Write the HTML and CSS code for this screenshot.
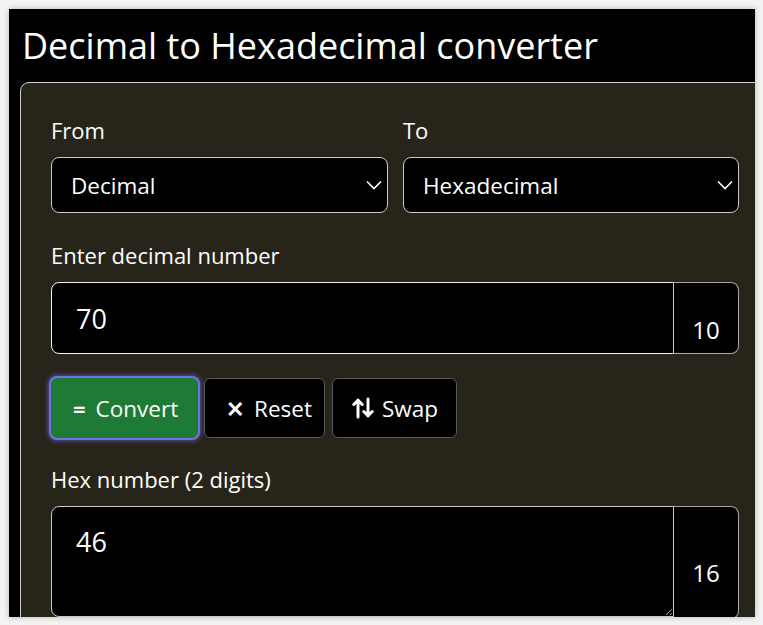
FILE: index.html
```html
<!DOCTYPE html>
<html lang="en">
<head>
<meta charset="utf-8">
<title>Decimal to Hexadecimal converter</title>
<link rel="stylesheet" href="styles.css">
</head>
<body>
<div class="window">
  <h1 class="title">Decimal to Hexadecimal converter</h1>
  <div class="card">
    <div class="pair">
      <div class="field">
        <label class="label" for="from">From</label>
        <div class="select">
          <span>Decimal</span>
          <svg class="chev" viewBox="0 0 16 10" width="16" height="10"><path d="M1 1.5l7 7 7-7" fill="none" stroke="#fff" stroke-width="1.6"/></svg>
        </div>
      </div>
      <div class="field">
        <label class="label" for="to">To</label>
        <div class="select">
          <span>Hexadecimal</span>
          <svg class="chev" viewBox="0 0 16 10" width="16" height="10"><path d="M1 1.5l7 7 7-7" fill="none" stroke="#fff" stroke-width="1.6"/></svg>
        </div>
      </div>
    </div>

    <label class="label label-gap" for="num">Enter decimal number</label>
    <div class="group">
      <input id="num" class="control" type="text" value="70">
      <span class="addon">10</span>
    </div>

    <div class="buttons">
      <button class="btn btn-go"><b class="sym">=</b> Convert</button>
      <button class="btn btn-reset"><b class="sym">&#x2715;</b> Reset</button>
      <button class="btn btn-swap">
        <svg class="swap" viewBox="0 0 22 22" width="22" height="22"><path d="M6 20V3M1.8 7.5L6 3.2l4.2 4.3M16 2v17M11.8 14.5L16 18.8l4.2-4.3" fill="none" stroke="#fff" stroke-width="3" stroke-linecap="round" stroke-linejoin="round"/></svg>
        Swap</button>
    </div>

    <label class="label label-gap2" for="hex">Hex number (2 digits)</label>
    <div class="group">
      <textarea id="hex" class="control area" readonly>46</textarea>
      <span class="addon addon-tall">16</span>
    </div>
  </div>
</div>
</body>
</html>
```

FILE: styles.css
```css
html, body {
  margin: 0;
  padding: 0;
}

body {
  background: #f3f3f3;
  font-family: "Open Sans", "Noto Sans", sans-serif;
  color: #fff;
  width: 763px;
  height: 625px;
  overflow: hidden;
}

.window {
  margin: 9px;
  width: 746px;
  height: 608px;
  background: #000;
  overflow: hidden;
  box-shadow: 0 0 6px rgba(0, 0, 0, 0.25);
}

.title {
  margin: 0;
  padding: 12px 0 0 13px;
  height: 61px;
  font-weight: 400;
  font-size: 36px;
  line-height: 49px;
  color: #fff;
}

.card {
  margin-left: 11px;
  width: 688px;
  padding: 31px 30px 40px;
  border: 1px solid #d0d0d0;
  border-radius: 9px;
  background: #27241a;
}

.pair {
  display: grid;
  grid-template-columns: 337px 336px;
  column-gap: 15px;
}

.field {
  display: flex;
  flex-direction: column;
}

.label {
  display: block;
  font-size: 22px;
  line-height: 32px;
  margin-bottom: 11px;
  color: #fff;
}

.label-gap {
  margin-top: 26px;
  margin-bottom: 11px;
}

.label-gap2 {
  margin-top: 25px;
  margin-bottom: 11px;
}

.select {
  box-sizing: border-box;
  height: 56px;
  display: flex;
  align-items: center;
  justify-content: space-between;
  padding: 0 5px 0 19px;
  border: 1px solid #c8c8c8;
  border-radius: 8px;
  background: #000;
  font-size: 22.5px;
}

.chev {
  display: block;
  flex-shrink: 0;
}

.group {
  display: flex;
}

.control {
  box-sizing: border-box;
  flex: 1;
  min-width: 0;
  height: 72px;
  margin: 0;
  padding: 0 24px;
  border: 1px solid #f2f2f2;
  border-radius: 8px 0 0 8px;
  background: #000;
  color: #fff;
  font-family: inherit;
  font-size: 27px;
  outline: none;
}

.area {
  height: 111px;
  padding-top: 16px;
  line-height: 1.4;
  resize: vertical;
  border-color: #c8c8c8;
  color-scheme: dark;
}

.addon {
  box-sizing: border-box;
  width: 66px;
  height: 72px;
  display: flex;
  align-items: flex-end;
  justify-content: center;
  padding-bottom: 11px;
  border: 1px solid #a8a8a8;
  border-left-color: #c8c8c8;
  border-radius: 0 8px 8px 0;
  margin-left: -1px;
  background: #000;
  font-size: 24px;
  line-height: 1;
}

.addon-tall {
  height: 113px;
  align-items: center;
  padding: 20px 0 0;
}

.buttons {
  display: flex;
  gap: 6px;
  margin-top: 24px;
}

.btn {
  box-sizing: border-box;
  height: 60px;
  display: flex;
  align-items: center;
  gap: 10px;
  padding: 0 19px;
  border: 1px solid #5a5a5a;
  border-radius: 6px;
  background: #000;
  color: #fff;
  font-family: inherit;
  font-size: 22.5px;
  white-space: nowrap;
}

.btn-go {
  width: 147px;
  padding-left: 21px;
  background: #1e7b35;
  border-color: #1e7b35;
  box-shadow: 0 0 0 2px #7070e8, 0 0 5px 3px rgba(120, 120, 255, 0.55);
}

.btn-reset {
  width: 121px;
  padding-left: 21px;
}

.btn-swap {
  width: 125px;
  margin-left: 1px;
  gap: 8px;
}

.sym {
  font-weight: 700;
  font-size: 22px;
}

.swap {
  display: block;
  flex-shrink: 0;
}
```
